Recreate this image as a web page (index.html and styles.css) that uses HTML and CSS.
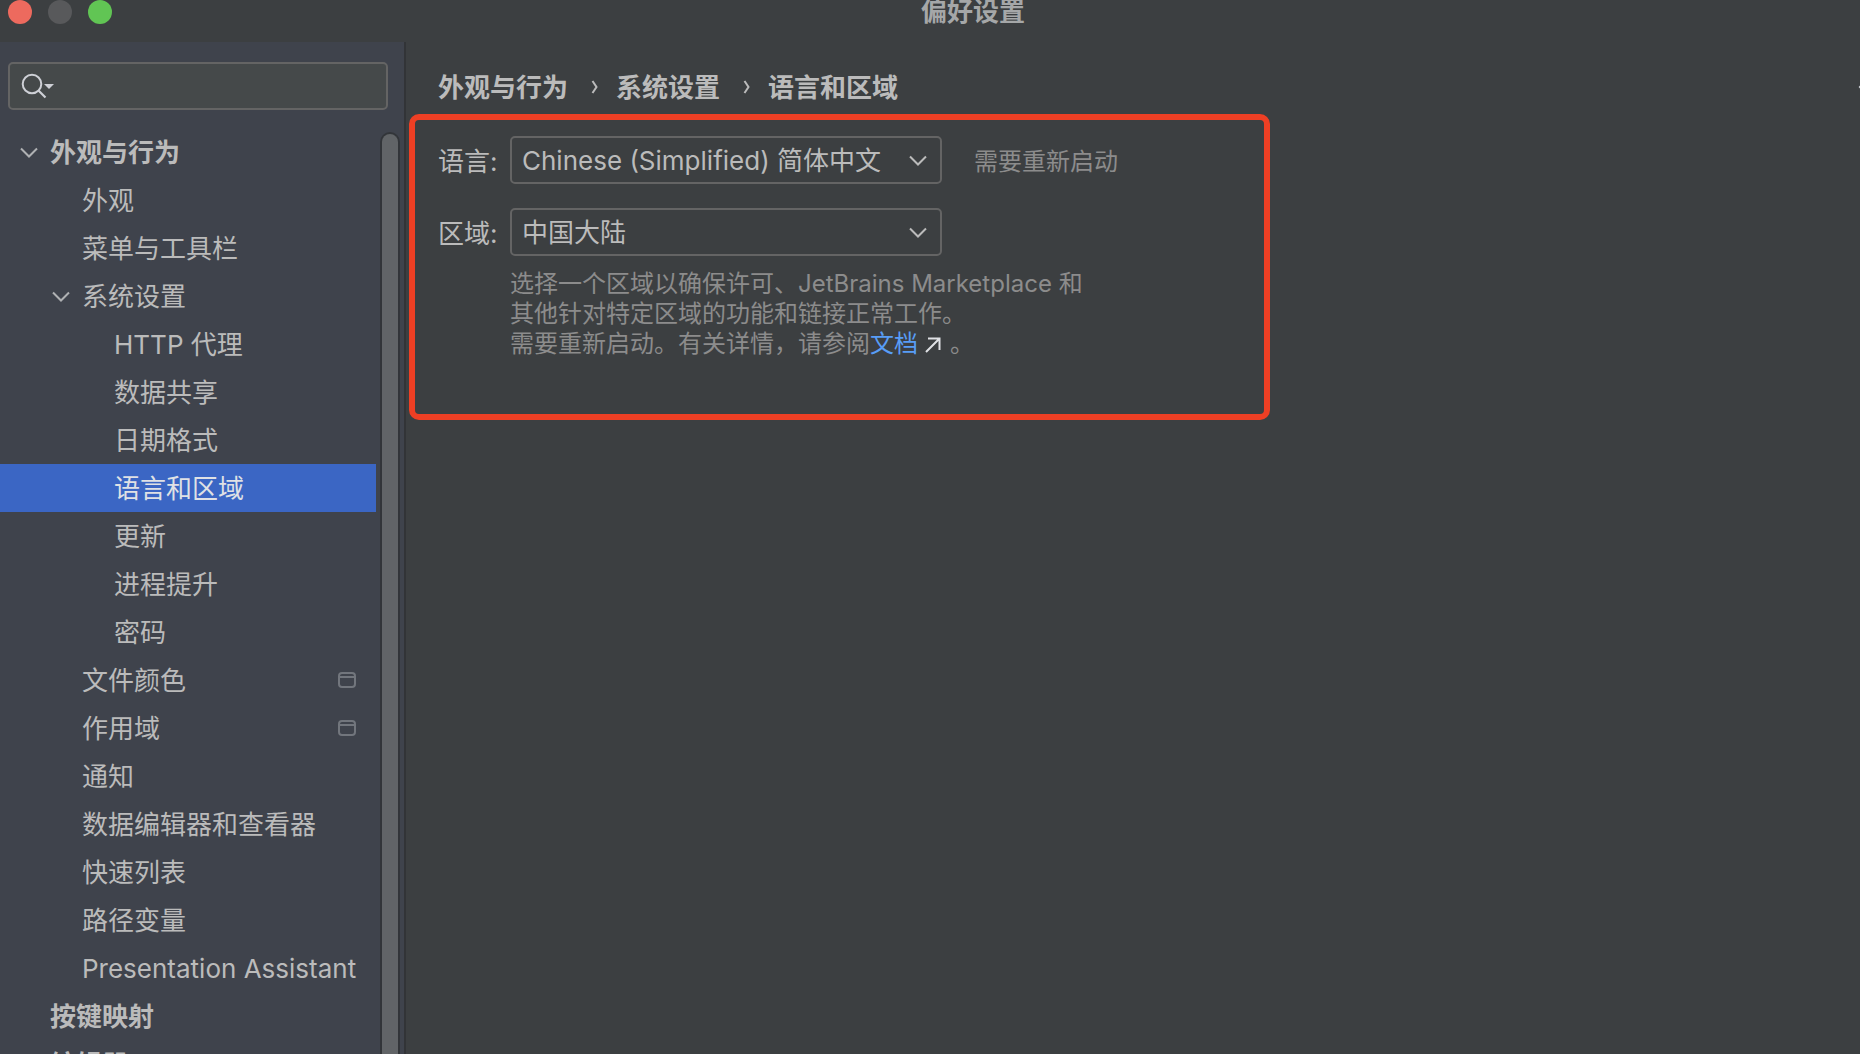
FILE: index.html
```
<!DOCTYPE html>
<html lang="zh-CN">
  <head>
    <meta charset="UTF-8" />
    <title>偏好设置</title>
    <link rel="stylesheet" href="styles.css">
  </head>
  <body>
    <header class="titlebar">
      <div class="lights">
        <button class="light close" aria-label="关闭"></button>
        <button class="light minimize" aria-label="最小化"></button>
        <button class="light zoom" aria-label="缩放"></button>
      </div>
      <h1>偏好设置</h1>
    </header>

    <div class="window">
      <aside class="sidebar">
        <label class="search">
          <svg width="34" height="26" viewBox="0 0 34 26">
            <circle cx="11" cy="11" r="9.3" fill="none" stroke="#ced0d6" stroke-width="2" />
            <path d="M17.5 17.5L24.5 24.5" stroke="#ced0d6" stroke-width="2.2" />
            <path d="M23 11h10l-5 5z" fill="#ced0d6" />
          </svg>
          <input type="text" aria-label="搜索" />
        </label>

        <div class="tree-wrap">
          <nav class="tree">
            <a href="#" class="row bold">
              <svg class="arrow" width="18" height="12" viewBox="0 0 18 12"><path d="M1 1.5l8 8 8-8" /></svg>
              外观与行为
            </a>
            <a href="#" class="row level-1">外观</a>
            <a href="#" class="row level-1">菜单与工具栏</a>
            <a href="#" class="row level-1 open">
              <svg class="arrow" width="18" height="12" viewBox="0 0 18 12"><path d="M1 1.5l8 8 8-8" /></svg>
              系统设置
            </a>
            <a href="#" class="row level-2">HTTP 代理</a>
            <a href="#" class="row level-2">数据共享</a>
            <a href="#" class="row level-2">日期格式</a>
            <a href="#" class="row level-2 selected">语言和区域</a>
            <a href="#" class="row level-2">更新</a>
            <a href="#" class="row level-2">进程提升</a>
            <a href="#" class="row level-2">密码</a>
            <a href="#" class="row level-1">
              文件颜色
              <svg class="project" width="18" height="18" viewBox="0 0 18 18"><rect x="1" y="1" width="16" height="14" rx="3" /><path d="M1 5h16" /></svg>
            </a>
            <a href="#" class="row level-1">
              作用域
              <svg class="project" width="18" height="18" viewBox="0 0 18 18"><rect x="1" y="1" width="16" height="14" rx="3" /><path d="M1 5h16" /></svg>
            </a>
            <a href="#" class="row level-1">通知</a>
            <a href="#" class="row level-1">数据编辑器和查看器</a>
            <a href="#" class="row level-1">快速列表</a>
            <a href="#" class="row level-1">路径变量</a>
            <a href="#" class="row level-1">Presentation Assistant</a>
            <a href="#" class="row top bold">按键映射</a>
            <a href="#" class="row top bold">编辑器</a>
          </nav>
          <div class="scrollbar"></div>
        </div>
      </aside>

      <main class="content">
        <div class="content-head">
          <nav class="breadcrumb">
            <a href="#">外观与行为</a>
            <svg width="12" height="14" viewBox="0 0 12 14"><path d="M6.5 1l4 6-4 6" /></svg>
            <a href="#">系统设置</a>
            <svg width="12" height="14" viewBox="0 0 12 14"><path d="M6.5 1l4 6-4 6" /></svg>
            <a href="#">语言和区域</a>
          </nav>
          <button class="back" aria-label="后退">
            <svg width="20" height="16" viewBox="0 0 20 16"><path d="M9 1L2 8l7 7M2 8h18" /></svg>
          </button>
        </div>

        <form class="panel">
          <label for="language">语言:</label>
          <div class="field">
            <div class="select">
              <select id="language">
                <option>Chinese (Simplified) 简体中文</option>
              </select>
              <svg width="18" height="12" viewBox="0 0 18 12"><path d="M1 2.5l8 8 8-8" /></svg>
            </div>
            <span class="note">需要重新启动</span>
          </div>

          <label for="region">区域:</label>
          <div class="field">
            <div class="select">
              <select id="region">
                <option>中国大陆</option>
              </select>
              <svg width="18" height="12" viewBox="0 0 18 12"><path d="M1 2.5l8 8 8-8" /></svg>
            </div>
          </div>

          <p class="help">
            选择一个区域以确保许可、JetBrains Marketplace 和<br />
            其他针对特定区域的功能和链接正常工作。<br />
            需要重新启动。有关详情，请参阅<a href="#">文档<svg width="16" height="16" viewBox="0 0 16 16"><path d="M1 15L14 2M3 1.5h11.5V13" /></svg></a>。
          </p>
        </form>
      </main>
    </div>
  </body>
</html>
```
FILE: styles.css
```
* {
  box-sizing: border-box;
}
body {
  margin: 0;
  height: 100vh;
  display: flex;
  flex-direction: column;
  overflow: hidden;
  background: #3c3f41;
  color: #bbbbbb;
  font-family: Inter, "Noto Sans CJK SC", sans-serif;
  font-size: 26px;
}
a {
  color: inherit;
  text-decoration: none;
}
svg {
  flex: none;
  fill: none;
}
button {
  padding: 0;
  border: none;
  background: none;
}

/* title bar */
.titlebar {
  display: flex;
  height: 42px;
  flex: none;
}
.lights {
  display: flex;
  gap: 16px;
  padding-left: 8px;
}
.light {
  width: 24px;
  height: 24px;
  border-radius: 50%;
}
.close {
  background: #ed6a5e;
}
.minimize {
  background: #58595b;
}
.zoom {
  background: #61c554;
}
.titlebar h1 {
  flex: 1;
  margin: 0;
  padding-right: 26px;
  color: #a5a7a8;
  font-size: 26px;
  line-height: 24px;
  text-align: center;
}

.window {
  display: flex;
  flex: 1;
  min-height: 0;
}

/* sidebar */
.sidebar {
  display: flex;
  flex-direction: column;
  flex: none;
  width: 406px;
  padding-top: 20px;
  background: #3f434c;
  border-right: 2px solid #323437;
}
.search {
  display: flex;
  align-items: center;
  flex: none;
  height: 48px;
  margin: 0 16px 18px 8px;
  padding-left: 11px;
  background: #45494a;
  border: 2px solid #646464;
  border-radius: 5px;
}
.search input {
  flex: 1;
  min-width: 0;
  border: none;
  outline: none;
  background: none;
  color: inherit;
  font: inherit;
}
.tree-wrap {
  display: flex;
  flex: 1;
  gap: 4px;
  min-height: 0;
}
.tree {
  width: 376px;
  overflow: hidden;
}
.row {
  display: flex;
  align-items: center;
  height: 48px;
  padding: 2px 20px 0;
  line-height: 48px;
  white-space: nowrap;
}
.arrow {
  margin-right: 12px;
  stroke: #afb1b3;
  stroke-width: 2;
}
.bold {
  font-weight: bold;
}
.top {
  padding-left: 50px;
}
.level-1 {
  padding-left: 82px;
}
.level-1.open {
  padding-left: 52px;
}
.level-2 {
  padding-left: 114px;
}
.selected {
  background: #3b66c4;
  color: #dfe1e5;
}
.project {
  margin-left: auto;
  stroke: #72767d;
  stroke-width: 2;
}
.scrollbar {
  width: 20px;
  margin-top: 4px;
  background: #616467;
  border: 2px solid #323539;
  border-bottom: none;
  border-radius: 10px 10px 0 0;
}

/* settings page */
.content {
  flex: 1;
  min-width: 0;
  padding-left: 3px;
}
.content-head {
  display: flex;
  align-items: center;
  justify-content: space-between;
  height: 72px;
  padding: 18px 0 0 29px;
  overflow: hidden;
}
.breadcrumb {
  display: flex;
  align-items: center;
  gap: 18px;
  font-weight: bold;
}
.breadcrumb a {
  padding-bottom: 4px;
}
.breadcrumb svg {
  stroke: #bbbbbb;
  stroke-width: 2;
}
.back {
  height: 16px;
  margin-right: -18px;
}
.back svg {
  display: block;
  stroke: #ced0d6;
  stroke-width: 2;
}
.panel {
  display: grid;
  grid-template-columns: 60px 1fr;
  column-gap: 12px;
  row-gap: 24px;
  align-items: center;
  max-width: 861px;
  padding: 16px 20px 55px 23px;
  border: 6px solid #ee3f24;
  border-radius: 10px;
}
.panel label,
.note {
  padding-bottom: 2px;
}
.field {
  display: flex;
  align-items: center;
  gap: 32px;
}
.select {
  display: grid;
  align-items: center;
  width: 432px;
}
.select select,
.select svg {
  grid-area: 1 / 1;
}
.select select {
  appearance: none;
  width: 100%;
  height: 48px;
  padding: 0 10px;
  background: none;
  border: 2px solid #646464;
  border-radius: 5px;
  color: inherit;
  font: inherit;
}
.select svg {
  justify-self: end;
  margin-right: 15px;
  stroke: #bbbbbb;
  stroke-width: 2;
  pointer-events: none;
}
.note,
.help {
  color: #8c8c8c;
  font-size: 24px;
}
.help {
  grid-column: 2;
  margin: -11px 0 0;
  line-height: 30px;
}
.help a {
  color: #589df6;
}
.help svg {
  margin: 0 9px 0 7px;
  vertical-align: -1px;
  stroke: #dfe1e5;
  stroke-width: 2;
}
```
